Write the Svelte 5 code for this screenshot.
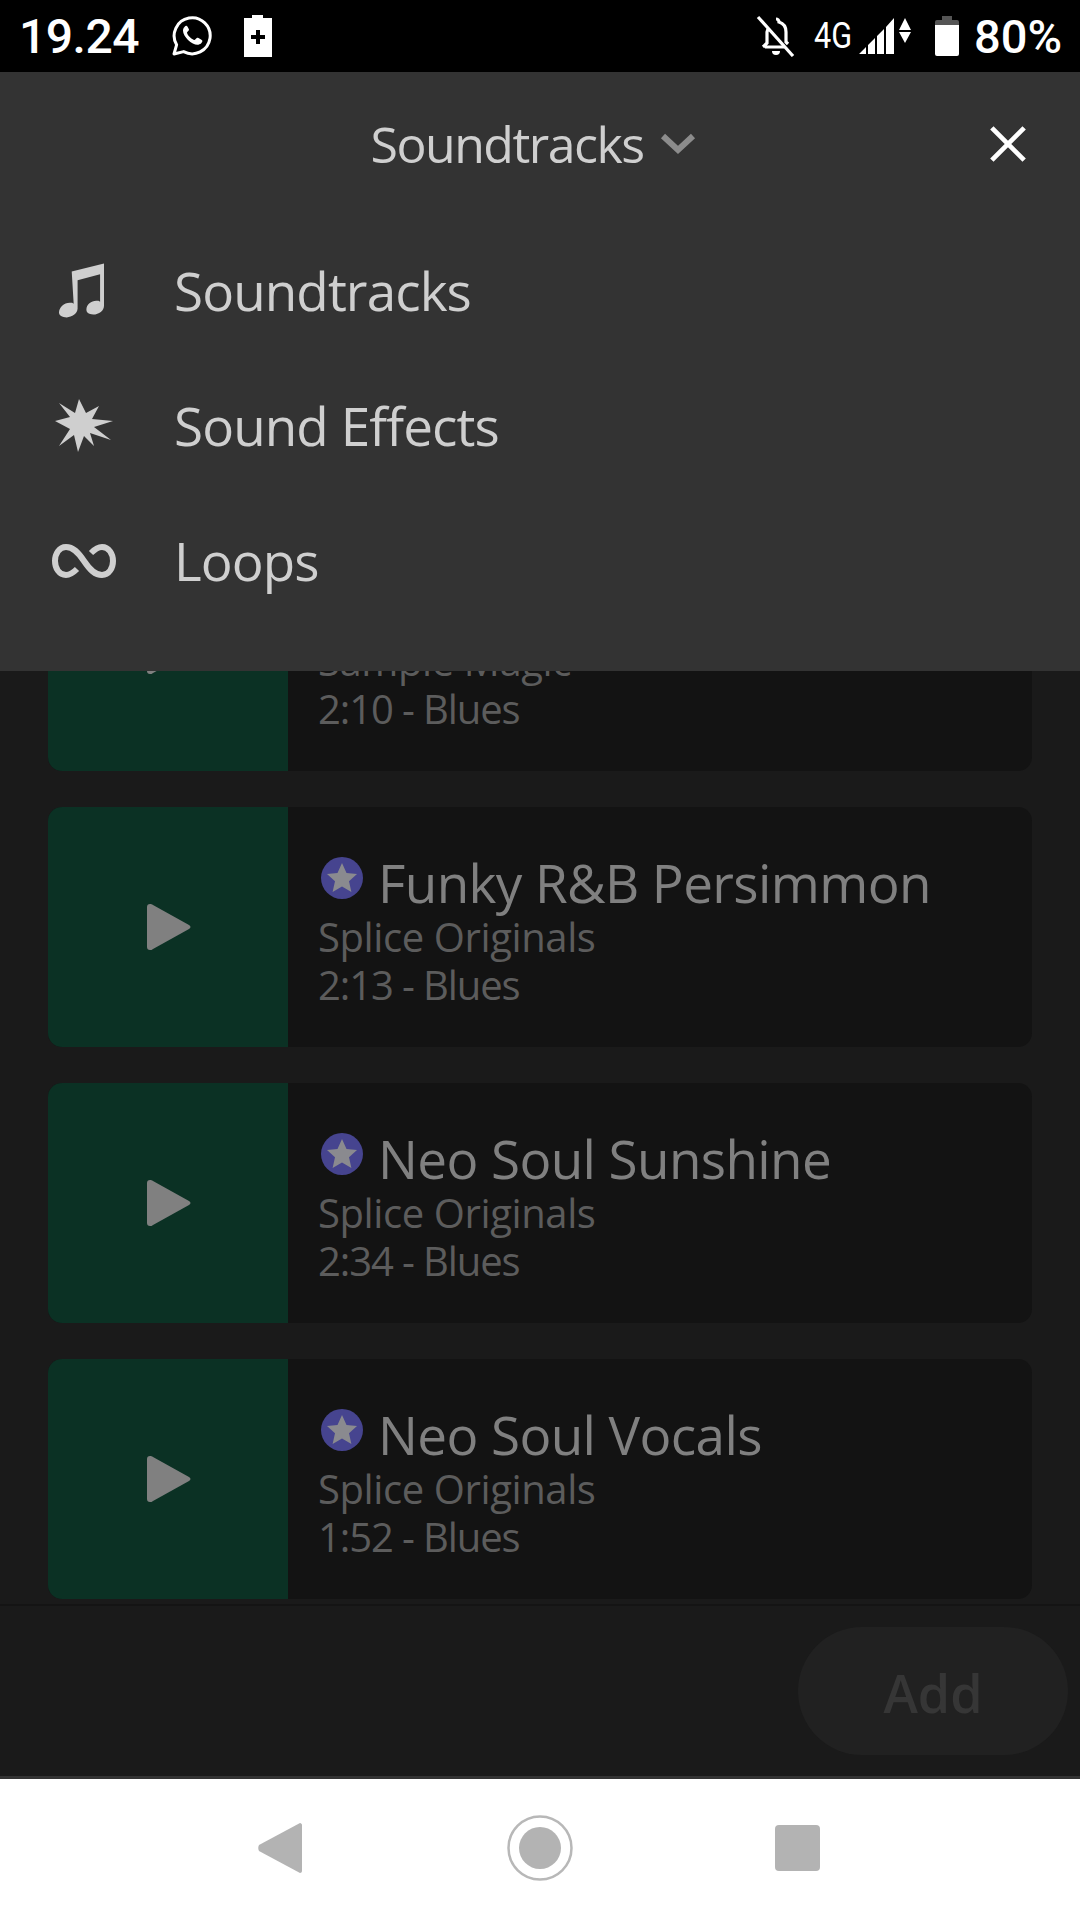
<script>
	const tracks = [
		{ title: '', artist: 'Sample Magic', info: '2:10 - Blues' },
		{ title: 'Funky R&B Persimmon', artist: 'Splice Originals', info: '2:13 - Blues' },
		{ title: 'Neo Soul Sunshine', artist: 'Splice Originals', info: '2:34 - Blues' },
		{ title: 'Neo Soul Vocals', artist: 'Splice Originals', info: '1:52 - Blues' }
	];
</script>

<div class="screen">
	<header class="status">
		<span class="time">19.24</span>
		<svg class="whatsapp" viewBox="0 0 42 42" width="42" height="42">
			<path d="M3 39l2.600-9.200A18 18 0 1 1 12.600 36.600z" fill="none" stroke="#fff" stroke-width="3" stroke-linejoin="round" />
			<path d="M15.500 10.800c-1.200 0-3.500 2-3.500 5 0 3 2.400 6.600 5 9.200 3 2.800 6.800 4.800 9.400 4.800 3 0 5-2.300 5-4 0-.8-4.200-3-5-3-.8 0-2 2.200-2.800 2.200-2.600 0-7.600-5-7.600-7.400 0-.8 2-1.800 2-2.800 0-.8-1.800-4-2.500-4z" fill="#fff" />
		</svg>
		<svg class="charging" viewBox="0 0 28 42" width="28" height="42">
			<path fill-rule="evenodd" d="M8 0h11v3h9v39H0V3h8zM12 15v5H7v4h5v5h4v-5h5v-4h-5v-5z" fill="#fff" />
		</svg>
		<span class="spacer"></span>
		<svg class="bell" viewBox="0 0 40 42" width="40" height="42">
			<path d="M20 4a3 3 0 0 1 3 3c5 1.500 7 5.500 7 10v10l2 2M9 32h19M12 14l-1 3v11l-4 4" fill="none" stroke="#fff" stroke-width="3.200" />
			<path d="M16 36h8a4 4 0 0 1-8 0z" fill="#fff" />
			<path d="M2 2l35 39" stroke="#fff" stroke-width="3.200" />
		</svg>
		<span class="net">4G</span>
		<svg class="signal" viewBox="0 0 52 38" width="52" height="38">
			<path d="M0 37l7-7v7zM9 28l7-7v16H9zM18 19l7-7v25h-7zM27 10l8-9v36h-8z" fill="#fff" />
			<path d="M40 13l6-12 6 12zM40 15h12l-6 11z" fill="#fff" />
		</svg>
		<svg class="battery" viewBox="0 0 24 40" width="24" height="40">
			<path d="M7 0h10v4h5a2 2 0 0 1 2 2v6H0V6a2 2 0 0 1 2-2h5z" fill="#555" />
			<path d="M0 9h24v29a2 2 0 0 1-2 2H2a2 2 0 0 1-2-2z" fill="#fff" />
		</svg>
		<span class="pct">80%</span>
	</header>

	<main class="stage">
		<div class="list">
			{#each tracks as t}
				<article class="card">
					<div class="thumb">
						<svg viewBox="0 0 44 46" width="44" height="46">
							<path d="M3 0c-2 0-3 1-3 3v40c0 2 1 3 3 3 1 0 2 0 3-1l36-20c2-1 2-3 0-4L6 1C5 0 4 0 3 0z" fill="#808080" />
						</svg>
					</div>
					<div class="meta">
						<div class="title">
							{#if t.title}
								<svg class="badge" viewBox="0 0 42 42" width="42" height="42">
									<circle cx="21" cy="21" r="21" fill="#46448f" />
									<path d="M21 6l4.500 10 10.500 1-8 7.200 2.400 10.800L21 29.400 11.600 35 14 24.200 6 17l10.500-1z" fill="#8a8a8f" />
								</svg>
								<span>{t.title}</span>
							{/if}
						</div>
						<div class="sub artist">{t.artist}</div>
						<div class="sub info">{t.info}</div>
					</div>
				</article>
			{/each}
		</div>

		<footer class="bar">
			<button class="add">Add</button>
		</footer>

		<section class="sheet">
			<div class="sheet-head">
				<span class="sheet-title">Soundtracks</span>
				<svg class="chev" viewBox="0 0 36 24" width="36" height="24">
					<path d="M3 4l15 14L33 4" fill="none" stroke="#8c8c8c" stroke-width="6" />
				</svg>
				<svg class="close" viewBox="0 0 40 40" width="38" height="38">
					<path d="M3 3l34 34M37 3L3 37" stroke="#fff" stroke-width="5" />
				</svg>
			</div>
			<ul class="menu">
				<li>
					<span class="ico">
						<svg class="note" viewBox="0 0 46 55" width="45" height="55">
							<path d="M13 8L46 0v43c0 5-5 9-11 9-5 0-7-2-7-5 0-5 5-9 10-9 2 0 3 0 4 1V11l-23 6v29c0 5-6 9-11 9-5 0-8-2-8-5 0-5 5-10 11-10 2 0 3 0 4 1z" fill="#cfcfcf" />
						</svg>
					</span>
					Soundtracks
				</li>
				<li>
					<span class="ico">
						<svg viewBox="0 0 58 53" width="58" height="53">
							<path d="M24 0L31 14 44 7 37 20 58 22 39 28 56 41 35 34 39 47 29 37 23 53 19 36 4 47 15 30 0 22 15 18 4 4 20 14z" fill="#cfcfcf" />
						</svg>
					</span>
					Sound Effects
				</li>
				<li>
					<span class="ico">
						<svg viewBox="0 0 64 34" width="64" height="34">
							<path d="M32 17C26 8 21 3 14 3 7 3 3 10 3 17s4 14 11 14c5 0 8-3 11-6M32 17c6 9 11 14 18 14 7 0 11-7 11-14S57 3 50 3c-5 0-8 3-11 6" fill="none" stroke="#cfcfcf" stroke-width="6" />
						</svg>
					</span>
					Loops
				</li>
			</ul>
		</section>
	</main>

	<nav class="nav">
		<svg viewBox="0 0 44 50" width="44" height="50">
			<path d="M42 0c1 0 2 1 2 2v46c0 1-1 2-2 2L1 28c-1-2-1-4 0-6z" fill="#b3b3b3" />
		</svg>
		<svg viewBox="0 0 66 66" width="66" height="66">
			<circle cx="33" cy="33" r="31.500" fill="none" stroke="#b8b8b8" stroke-width="2.500" />
			<circle cx="33" cy="33" r="21" fill="#b3b3b3" />
		</svg>
		<span class="square"></span>
	</nav>
</div>

<style>
	:global(body) { background: #000; }

	.screen {
		width: 1080px;
		height: 1920px;
		display: flex;
		flex-direction: column;
		overflow: hidden;
		font-family: "Open Sans", sans-serif;
	}

	.status {
		height: 72px;
		flex: none;
		background: #000;
		color: #fff;
		display: flex;
		align-items: center;
		padding: 0 18px 0 19px;
		font-family: Roboto, sans-serif;
	}
	.time { font-size: 48px; font-weight: 500; letter-spacing: -.5px; }
	.whatsapp { margin-left: 32px; }
	.charging { margin-left: 31px; }
	.spacer { flex: 1; }
	.net {
		font-size: 36px;
		margin-left: 18px;
		width: 39px;
		transform: scaleX(.85);
		transform-origin: left;
	}
	.signal { margin-left: 6px; }
	.battery { margin-left: 24px; }
	.pct { font-size: 47px; font-weight: 500; margin-left: 15px; }

	.stage {
		flex: 1;
		position: relative;
		display: flex;
		flex-direction: column;
		background: #1a1a1a;
		border-bottom: 3px solid #333;
		overflow: hidden;
	}
	.list {
		flex: 1;
		overflow: hidden;
		padding: 459px 48px 0;
		display: flex;
		flex-direction: column;
		gap: 36px;
	}
	.card {
		flex: none;
		height: 240px;
		display: flex;
		background: #131313;
		border-radius: 14px;
		overflow: hidden;
	}
	.thumb {
		width: 240px;
		flex: none;
		background: #0b3124;
		display: flex;
		align-items: center;
		justify-content: center;
		padding-left: 2px;
		box-sizing: border-box;
	}
	.meta {
		padding: 8px 0 0 30px;
		display: flex;
		flex-direction: column;
		justify-content: center;
	}
	.title {
		display: flex;
		align-items: center;
		gap: 15px;
		min-height: 60px;
		font-size: 53px;
		line-height: 60px;
		letter-spacing: -.6px;
		color: #808080;
	}
	.badge { margin-top: -10px; margin-left: 3px; }
	.sub {
		font-size: 40px;
		line-height: 48px;
		color: #5c5c5c;
	}
	.artist { letter-spacing: -.4px; }
	.info { letter-spacing: -1.1px; }

	.bar {
		height: 170px;
		flex: none;
		border-top: 2px solid #141414;
		display: flex;
		align-items: center;
		justify-content: flex-end;
		padding-right: 12px;
	}
	.add {
		width: 270px;
		height: 128px;
		padding: 3px 0 0;
		border: none;
		border-radius: 64px;
		background: #212121;
		color: #363636;
		font-family: inherit;
		font-size: 52px;
		font-weight: 600;
	}

	.sheet {
		position: absolute;
		top: 0;
		left: 0;
		right: 0;
		height: 599px;
		background: #333;
		color: #cfcfcf;
	}
	.sheet-head {
		height: 144px;
		position: relative;
		display: flex;
		align-items: center;
		justify-content: center;
		gap: 16px;
		padding-right: 14px;
	}
	.sheet-title { font-size: 50px; letter-spacing: -1.5px; }
	.close { position: absolute; right: 53px; top: 53px; }
	.menu {
		list-style: none;
		margin: 0;
		padding: 7px 0 0;
	}
	.menu li {
		height: 135px;
		display: flex;
		align-items: center;
		font-size: 53px;
		letter-spacing: -.9px;
	}
	.ico {
		width: 64px;
		margin: 0 58px 0 52px;
		display: flex;
		justify-content: center;
	}
	.note { margin-left: -5px; }

	.nav {
		height: 141px;
		flex: none;
		box-sizing: border-box;
		padding: 0 0 3px 258px;
		background: #fff;
		display: flex;
		align-items: center;
		gap: 205px;
	}
	.square {
		width: 45px;
		height: 46px;
		border-radius: 4px;
		background: #b3b3b3;
		margin-left: -3px;
	}
</style>
